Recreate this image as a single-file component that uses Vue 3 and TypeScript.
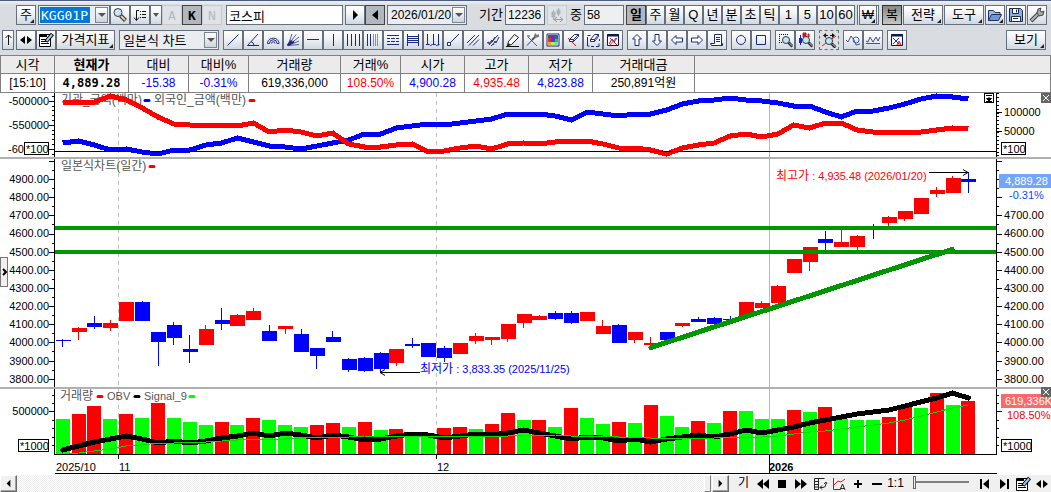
<script setup lang="ts">
import { h, ref } from 'vue'

interface Shape { d: string; s?: string; f?: string; w?: number }

const navy = '#1a2a80'
const circle = (x: number, y: number, r: number) =>
  `M${x - r} ${y}a${r} ${r} 0 1 0 ${2 * r} 0a${r} ${r} 0 1 0 ${-2 * r} 0z`

const lens = (x: number, y: number): Shape[] => [
  { d: `M${x + 2.5} ${y + 2.5}l4 4`, s: '#303030', w: 3 },
  { d: `M${x + 3.5} ${y + 3}l3 3`, s: '#b9bdc4', w: 1 },
  { d: circle(x, y, 3.5), s: '#2d3b4a', f: '#bfe6f0' },
]

const icons: Record<string, Shape[]> = {
  search: [
    { d: 'M8.5 8.5l5 5', s: '#303030', w: 4 },
    { d: 'M9 9l4 4', s: '#d9d3a0', w: 2 },
    { d: circle(6, 5.5, 4), s: '#2f4258', f: '#c2e0f0' },
    { d: 'M4 5l2-2M5 7l3-3', s: '#ffffff' },
  ],
  list: [
    { d: 'M7 3.500H4.500V13M2 10.500l2.500 3 2.500-3', s: '#111' },
    { d: 'M8 4.500h1M8 7.500h1M8 10.500h1M10 4.500h4M10 7.500h4M10 10.500h4', s: '#111' },
  ],
  play: [{ d: 'M6 3l5 5-5 5z', f: '#000' }],
  back: [{ d: 'M11 3v10L5 8z', f: '#000' }],
  spread: [
    { d: 'M4.500 3v10M9.500 1v8M3 5h3v5H3zM8 3h3v4H8z', s: '#aeb3b9', f: '#aeb3b9' },
    { d: 'M5 12.500h9M8 10l-3 2.500L8 15M11 10l3 2.500-3 2.500', s: '#989da5' },
  ],
  folder: [
    { d: 'M1.500 13.500v-10h5l1.500 2h5v3', s: '#23345c', f: '#9dbbe6' },
    { d: 'M1.500 13.500l3-6h10l-3 6z', s: '#23345c', f: '#6d98d4' },
  ],
  save: [
    { d: 'M1.500 1.500h11l2 2v11h-13z', s: '#1d2c4d', f: '#8eaee0' },
    { d: 'M4.500 1.500h6v5h-6zM3.500 9.500h9v5h-9z', s: '#1d2c4d', f: '#ffffff' },
    { d: 'M8.500 2.500v3M5 11.500h5', s: '#1d2c4d' },
  ],
  wrench: [
    { d: 'M2 14l8-8', s: '#444', w: 4 },
    { d: 'M2.500 13.500l7-7', s: '#b6b6b6', w: 2 },
    { d: 'M8 6l1-4 3-1-1 3 2 1 2-1-1 4-4 1z', s: '#444', f: '#aaaaaa' },
  ],
  up: [{ d: 'M8.500 3v10M5.500 6l3-3 3 3', s: '#111' }],
  both: [{ d: 'M7 4v8L2 8zM9 4v8l5-4z', f: '#000' }],
  note: [
    { d: 'M1.500 2.500h11v12h-11z', s: '#000', f: '#ffffff' },
    { d: 'M1 4h8', s: '#000', w: 2 },
    { d: 'M3 7.500h5M3 9.500h6M3 11.500h8', s: '#000' },
    { d: 'M14.500 2L8 9.500', s: '#000', w: 4 },
    { d: 'M14 2.500L8.500 9', s: '#9cc5ef', w: 2 },
  ],
  line: [{ d: 'M2.500 13.500l11-11', s: navy }],
  angle: [{ d: 'M13 2L2.500 13.500H14M6 9.500q3 1 3 4', s: navy }],
  arcs: [
    { d: 'M2.500 11.500v-1a6 6 0 0 1 11.500 0v1M4.500 11.500a3.700 3.700 0 0 1 7.500 0M6.500 11.500a1.700 1.700 0 0 1 3.500 0M2.500 11.500h2M12 11.500h2', s: navy },
  ],
  fan: [
    { d: 'M3 13.500L7 2M3 13.500l8-11M3 13.500L14 5M3 13.500L14 9M3 13.500l11-1', s: '#506090' },
    { d: 'M2.500 13.500l4-5M3 13.500l6-4', s: navy, w: 2 },
  ],
  hline: [{ d: 'M2 7.500h12', s: navy }],
  vline: [{ d: 'M8.500 2v12', s: navy }],
  bars: [{ d: 'M2.500 2v12M6.500 2v12M10.500 2v12M14.500 2v12', s: navy }],
  barsfade: [
    { d: 'M2.500 2v12M5.500 2v12', s: navy },
    { d: 'M8.500 2v12M10.500 2v12M12.500 2v12', s: '#8490b0' },
  ],
  rows: [
    { d: 'M2 3.500h12M2 12.500h12', s: navy },
    { d: 'M2 6.500h3M6 6.500h4M11 6.500h3M2 9.500h3M6 9.500h4M11 9.500h3', s: navy },
  ],
  ladder: [{ d: 'M2.500 2v12M13.500 2v12M3 4.500h10M3 6.500h10M3 8.500h10M3 10.500h10', s: navy }],
  waves: [{ d: 'M2.500 2v11M8.500 2v11M13.500 2v11M1 12.500h3.500l1 1 2-1h3l1 1 3-1', s: navy }],
  anchor: [{ d: 'M14 2L5 11', s: navy }, { d: 'M2.500 10.500h3v3h-3z', s: navy, f: '#fff' }],
  parallel: [{ d: 'M2 11l8-8M4 13.500L14 3M8 13.500l6-6', s: navy }],
  hatch: [{ d: 'M2 11l2-1 0 2 3-4 0 2 3-5M6 14l2-2 0 1 2-4 1 2 3-6M4 13l9-10', s: navy }],
  pencil: [
    { d: 'M3.500 9.500l6-7 4 3-7 7-4 1z', s: '#111', f: '#ffffff' },
    { d: 'M2 14l2-3 1 2z', f: '#111' },
    { d: 'M1 14.500h13', s: '#111' },
  ],
  cross: [
    { d: 'M3 5l9 9', s: '#e02020' },
    { d: 'M2 13.500L8 7M2 4h3', s: '#2030d0' },
    { d: 'M7 8l4-4', s: '#555', w: 2 },
    { d: 'M9 4l1-3 2 2 2-1v3l-4 1z', f: '#777' },
  ],
  palette: [
    { d: 'M2 2h12v12H2z', s: navy, f: '#fff' },
    { d: 'M3 3h3v3H3z', f: '#555' }, { d: 'M6 3h4v4H6z', f: '#7030b0' }, { d: 'M10 3h3v4h-3z', f: '#108060' },
    { d: 'M3 6h3v4H3z', f: '#e03030' }, { d: 'M6 7h4v3H6z', f: '#2050e0' }, { d: 'M10 7h3v3h-3z', f: '#30c060' },
    { d: 'M3 10h3v3H3z', f: '#f0a040' }, { d: 'M6 10h4v3H6z', f: '#b0f040' }, { d: 'M10 10h3v3h-3z', f: '#60e0d0' },
  ],
  eraser: [
    { d: 'M3 6l8 8', s: '#e02020' },
    { d: 'M4.500 7.500l5-5h4l-5 5zM4.500 7.500v2h4l5-5v-2M8.500 7.500v2', s: navy, f: '#fff' },
  ],
  eraserall: [
    { d: 'M2.500 5v9h2M6 14.500h3M11 14.500h3v-3M14.500 9V7M2.500 3.500h3', s: navy },
    { d: 'M5.500 7.500l4-5h4l-4 5zM5.500 7.500v2h4l4-5v-2M9.500 7.500v2', s: navy, f: '#fff' },
  ],
  delwin: [
    { d: 'M2.500 2.500h11v11h-11z', s: '#101850', f: '#fff' },
    { d: 'M2 3.500h12', s: '#101850', w: 2 },
    { d: 'M4 12l3-5 2 3 3-4', s: '#2030d0' },
    { d: 'M5 6l7 7M11 6l-6 7', s: '#e02020' },
  ],
  aup: [{ d: 'M8 2.500l4.500 4.500H10v6.500H6V7H3.500z', s: navy, f: '#fff' }],
  adown: [{ d: 'M8 13.500L3.500 9H6V2.500h4V9h2.500z', s: navy, f: '#fff' }],
  aleft: [{ d: 'M2.500 8L7 3.500V6h6.500v4H7v2.500z', s: navy, f: '#fff' }],
  aright: [{ d: 'M13.500 8L9 3.500V6H2.500v4H9v2.500z', s: navy, f: '#fff' }],
  scroll: [
    { d: 'M5.500 2.500h7v11h-10l-1-2h4z', s: navy, f: '#fff' },
    { d: 'M12.500 11.500h1v2h-4', s: navy },
    { d: 'M7 5.500h4M7 7.500h4M7 9.500h4', s: navy },
  ],
  round: [{ d: circle(8, 8, 4.5), s: navy }],
  square: [{ d: 'M3.500 3.500h9v9h-9z', s: navy }],
  zoombox: [
    { d: 'M2.500 2v1M2.500 4v1M2.500 6v1M2.500 8v1M2.500 10v1M4 2.500h1M6 2.500h1M8 2.500h1M10 2.500h1M4 10.500h1', s: '#111' },
    ...lens(9, 8),
  ],
  zoomcandle: [
    { d: 'M3.500 3v10', s: '#1020e0' }, { d: 'M2 6h3v5H2z', f: '#1020e0' },
    { d: 'M6 1h3v4H6zM11 2h1v3h-1z', s: '#e01010', f: '#e01010' },
    ...lens(9, 8),
  ],
  zoomfit: [
    { d: 'M1 14L15 4', s: '#e02020' },
    { d: 'M4 3.500h3M9 3.500h3', s: '#111' },
    { d: 'M5 1v5L2 3.500zM11 1v5l3-2.500z', f: '#111' },
    ...lens(8, 9),
  ],
  wave1: [
    { d: 'M1 8l2 2 3-6 3 4 2 5 4-1', s: '#455080' },
    { d: circle(11, 8, 3), s: '#4060c0' },
  ],
  wave2: [{ d: 'M1 9l2 1 2-5 3 5 3-5 2 4 2-4', s: '#455080' }, { d: 'M1 11.500h14', s: '#3050d0' }],
  winA: [
    { d: 'M2.500 2.500h11v11h-11z', s: '#101850', f: '#fff' },
    { d: 'M2 3.500h12', s: '#101850', w: 2 },
    { d: 'M4 6l6 6M10 6l-6 6', s: '#2030d0' },
    { d: 'M8 13l2-4 2 4M9 12h3', s: '#e02020' },
  ],
  rew: [{ d: 'M8 3v10L2 8zM14 3v10L8 8z', f: '#000' }],
  stop: [{ d: 'M4 4h8v8H4z', f: '#000' }],
  fwd: [{ d: 'M2 3v10l6-5zM8 3v10l6-5z', f: '#000' }],
  grid: [
    { d: 'M2.500 2.500h10M2.500 2.500v11h4v-11M2.500 5.500h4M2.500 8.500h4M2.500 11h4', s: '#222' },
    { d: 'M8 11.500h3q3 0 3-4M8 11.500l2-2M8 11.500l2 2M12 8l2-2 1 2', s: '#222' },
  ],
  chartA: [
    { d: 'M2.500 2v11.500H9', s: '#444' },
    { d: 'M3 9l4-4 3 1 4-3', s: '#e02020' },
    { d: 'M9 14l2.500-6L14 14M10 12.500h3', s: '#222' },
  ],
  plus: [{ d: 'M4 8h8M8 4v8', s: '#000', w: 2 }],
  minus: [{ d: 'M3 8h10', s: '#000', w: 2 }],
  first: [{ d: 'M4 3v10', s: '#000', w: 2 }, { d: 'M12 3v10L6 8z', f: '#000' }],
  last: [{ d: 'M12 3v10', s: '#000', w: 2 }, { d: 'M4 3v10l6-5z', f: '#000' }],
}

const Icon = (props: { name: string }) =>
  h('svg', { viewBox: '0 0 16 16', width: 16, height: 16, 'aria-hidden': 'true' },
    icons[props.name].map(p => h('path', {
      d: p.d, stroke: p.s ?? 'none', fill: p.f ?? 'none', 'stroke-width': p.w ?? 1,
    })))
Icon.props = ['name']

const drawTools = ['line', 'angle', 'arcs', 'fan', 'hline', 'vline', 'bars', 'barsfade', 'rows', 'ladder', 'waves',
  'anchor', 'parallel', 'hatch', 'pencil', 'cross', 'palette', 'eraser', 'eraserall', 'delwin']
const toolGroups = [drawTools, ['aup', 'adown', 'aleft', 'aright', 'scroll'], ['round', 'square'],
  ['zoombox', 'zoomcandle'], ['zoomfit'], ['wave1', 'wave2'], ['winA']]
const fileTools = ['folder', 'save', 'wrench']
const playTools = ['rew', 'stop', 'fwd', 'grid', 'chartA', 'plus', 'minus']
const endTools = ['first', 'last', 'note', 'both']
const periods = ['일', '주', '월', 'Q', '년', '분', '초', '틱', '1', '5', '10', '60']

const code = ref('KGG01P')
const stock = ref('코스피')
const date = ref('2026/01/20')
const span = ref('12236')
const shown = ref('58')
const period = ref('일')
const offset = ref(0)

const quote = [
  { h: '시각', v: '[15:10]', c: '' },
  { h: '현재가', v: '4,889.28', c: 'strong' },
  { h: '대비', v: '-15.38', c: 'down' },
  { h: '대비%', v: '-0.31%', c: 'down' },
  { h: '거래량', v: '619,336,000', c: '' },
  { h: '거래%', v: '108.50%', c: 'rise' },
  { h: '시가', v: '4,900.28', c: 'down' },
  { h: '고가', v: '4,935.48', c: 'rise' },
  { h: '저가', v: '4,823.88', c: 'down' },
  { h: '거래대금', v: '250,891억원', c: '' },
  { h: '', v: '', c: '' },
]

const x = (i: number) => 62.7 + i * 15.89
const R = '#ff0000'
const B = '#0000ff'
const G = '#00ff00'

// body top, body bottom, high, low
const candles: [string, number, number, number, number][] = [
  [B, 340, 341, 339, 347], [R, 328, 332, 327, 340], [B, 323, 327, 316, 329], [R, 323, 328, 320, 331],
  [R, 302, 321, 302, 321], [B, 302, 321, 301, 321], [B, 332, 342, 332, 366], [B, 325, 338, 322, 345],
  [B, 349, 352, 335, 363], [R, 329, 345, 325, 345], [B, 320, 324, 308, 330], [R, 315, 326, 314, 326],
  [R, 311, 320, 308, 320], [B, 331, 341, 325, 341], [R, 326, 329, 326, 334], [B, 334, 352, 329, 352],
  [B, 348, 356, 348, 369], [B, 337, 342, 331, 342], [B, 359, 370, 358, 372], [B, 358, 371, 357, 372],
  [B, 353, 369, 352, 372], [R, 349, 363, 349, 366], [B, 344, 346, 338, 348], [B, 343, 357, 343, 357],
  [B, 348, 358, 346, 362], [R, 343, 354, 343, 354], [R, 336, 341, 333, 344], [R, 337, 340, 337, 345],
  [R, 324, 339, 324, 342], [R, 314, 323, 314, 328], [R, 316, 320, 315, 320], [B, 313, 319, 311, 320],
  [B, 313, 323, 311, 324], [R, 312, 321, 312, 321], [R, 326, 334, 320, 334], [B, 325, 343, 324, 343],
  [R, 332, 340, 332, 343], [R, 343, 345, 337, 345], [B, 332, 340, 332, 340], [R, 323, 326, 323, 327],
  [B, 319, 322, 317, 322], [B, 318, 324, 317, 324], [B, 319, 320, 316, 320], [R, 302, 316, 302, 316],
  [R, 303, 308, 301, 308], [R, 286, 303, 285, 303], [R, 259, 273, 259, 273], [R, 247, 262, 247, 271],
  [B, 239, 243, 231, 250], [R, 242, 247, 230, 247], [R, 236, 247, 235, 250], [B, 228, 229, 224, 239],
  [R, 217, 223, 216, 226], [R, 211, 219, 211, 221], [R, 198, 214, 198, 214], [R, 190, 194, 187, 197],
  [R, 178, 193, 176, 193], [B, 179, 182, 172, 193],
]

const volumeTop = [419, 414, 406, 419, 414, 418, 403, 418, 422, 425, 422, 425, 418, 420, 425, 427, 425, 423, 427,
  422, 430, 429, 432, 433, 428, 427, 429, 424, 413, 420, 420, 427, 408, 418, 424, 422, 423, 405, 416, 427,
  421, 423, 411, 411, 419, 419, 410, 412, 407, 419, 420, 420, 417, 406, 408, 393, 405, 401]
const volumeUp = new Set([1, 2, 4, 6, 10, 12, 16, 17, 19, 21, 24, 25, 27, 28, 30, 32, 35, 37, 40, 42, 46, 48, 52, 53, 55, 57])

const obv = [450, 446, 442, 439, 436, 439, 443, 441, 443, 441, 438, 436, 433, 436, 433, 435, 438, 435, 437, 440, 439,
  436, 434, 435, 438, 436, 434, 435, 433, 430, 433, 436, 439, 437, 438, 441, 439, 442, 439, 437, 435, 437, 434, 430,
  433, 430, 427, 423, 420, 417, 414, 412, 410, 406, 402, 398, 393, 398]
const signal = [454, 453, 451, 449, 446, 445, 443, 443, 442, 442, 441, 440, 439, 439, 439, 438, 437, 437, 437, 436,
  436, 436, 436, 436, 436, 436, 436, 436, 436, 435, 435, 435, 436, 436, 436, 437, 437, 438, 438, 438, 438, 438, 437,
  437, 437, 436, 434, 432, 431, 429, 427, 425, 423, 420, 416, 412, 408, 405]
const inst = [143, 141, 145, 150, 149, 152, 154, 150, 150, 145, 143, 138, 142, 146, 147, 149, 146, 143, 140, 134, 134,
  128, 126, 124, 125, 123, 121, 119, 114, 114, 114, 116, 120, 112, 114, 116, 114, 114, 110, 104, 101, 100, 98, 100,
  101, 103, 106, 106, 112, 117, 111, 111, 108, 104, 99, 96, 97, 99]
const foreign = [102, 102, 102, 96, 100, 108, 117, 124, 125, 125, 125, 126, 123, 132, 130, 132, 136, 133, 144, 147,
  147, 145, 144, 152, 151, 148, 146, 149, 144, 143, 144, 142, 141, 141, 144, 148, 148, 150, 154, 148, 145, 143, 136,
  134, 137, 134, 125, 128, 123, 123, 130, 132, 132, 133, 132, 130, 128, 129]

const points = (ys: number[]) => ys.map((y, i) => `${x(i).toFixed(1)},${y}`).join(' ')

const prices = Array.from({ length: 12 }, (_, i) => {
  const value = 4900 - i * 100
  return { label: value.toFixed(2), y: Math.round(179 + i * 18.15) }
})

const ticks = (ys: number[], from: number, len: number) => ys.map(y => `M${from} ${y}.5h${len}`).join('')
const range = (a: number, b: number, step: number) => {
  const out: number[] = []
  for (let v = a; v <= b; v += step) out.push(Math.round(v))
  return out
}
const priceMajor = range(161, 380, 18.15)
const priceMinor = range(170, 380, 18.15)
const tickPath = [
  ticks([101, 125, 149], 49, 6), ticks(range(96, 156, 4.8), 52, 3), ticks(priceMajor, 49, 6), ticks(priceMinor, 52, 3),
  ticks([411], 49, 6), ticks([395, 403, 420, 428, 437, 445], 52, 3),
  ticks([112, 131], 997, 5), ticks(range(93, 156, 3.9), 997, 2), ticks(priceMajor, 997, 5), ticks(priceMinor, 997, 2),
  ticks([411], 997, 5), ticks([395, 403, 420, 428, 437, 445], 997, 2),
].join('')
</script>

<template>
  <main class="app">
    <header class="bars">
      <div class="row top">
        <button class="btn mark">주</button>
        <div class="group">
          <span class="combo code">
            <input v-model="code" aria-label="종목코드" />
            <button class="drop" aria-label="종목 목록"></button>
          </span>
          <button class="btn" aria-label="검색"><Icon name="search" /></button>
          <button class="btn" aria-label="목록"><Icon name="list" /></button>
          <button class="btn slim caret" aria-label="더보기"></button>
          <button class="btn mono off" disabled>A</button>
          <button class="btn mono pressed">K</button>
          <button class="btn mono off" disabled>N</button>
        </div>
        <input v-model="stock" class="box name" aria-label="종목명" />
        <div class="group">
          <button class="btn" aria-label="다음"><Icon name="play" /></button>
          <button class="btn pressed" aria-label="이전"><Icon name="back" /></button>
        </div>
        <span class="combo date">
          <input v-model="date" aria-label="날짜" />
          <button class="drop" aria-label="달력"></button>
        </span>
        <label class="field">기간<input v-model="span" class="box num" /></label>
        <button class="btn off" disabled aria-label="간격"><Icon name="spread" /></button>
        <label class="field near">중<input v-model="shown" class="box num" /></label>
        <div class="group periods">
          <button v-for="p in periods" :key="p" class="btn" :class="{ pressed: p === period }" @click="period = p">{{ p }}</button>
        </div>
        <button class="btn mark won">₩</button>
        <div class="group menus">
          <button class="btn dark">복</button>
          <button class="btn wide mark">전략</button>
          <button class="btn wide mark">도구</button>
          <button v-for="n in fileTools" :key="n" class="btn" :class="{ mark: n === 'folder' }" :aria-label="n">
            <Icon :name="n" />
          </button>
        </div>
      </div>

      <div class="row tools">
        <button class="btn slim" aria-label="위로"><Icon name="up" /></button>
        <div class="group">
          <button v-for="n in ['both', 'note']" :key="n" class="btn" :aria-label="n"><Icon :name="n" /></button>
          <button class="btn index mark">가격지표</button>
        </div>
        <span class="combo kind">
          <select aria-label="차트 종류"><option>일본식 차트</option></select>
          <span class="drop" aria-hidden="true"></span>
        </span>
        <div v-for="(g, gi) in toolGroups" :key="gi" class="group">
          <button v-for="n in g" :key="n" class="btn" :class="{ dotted: n === 'zoomfit' }" :aria-label="n">
            <Icon :name="n" />
          </button>
        </div>
        <button class="btn wide mark view">보기</button>
      </div>
    </header>

    <table class="quote">
      <colgroup>
        <col class="c54" /><col class="c74" /><col class="c60" /><col class="c60" /><col class="c92" /><col class="c60" />
        <col class="c64" /><col class="c64" /><col class="c64" /><col class="c102" /><col />
      </colgroup>
      <thead>
        <tr><th v-for="(q, i) in quote" :key="i" :class="{ strong: q.c === 'strong' }">{{ q.h }}</th></tr>
      </thead>
      <tbody>
        <tr><td v-for="(q, i) in quote" :key="i" :class="q.c">{{ q.v }}</td></tr>
      </tbody>
    </table>

    <section class="chart">
      <svg class="plot" viewBox="0 93 1051 382" role="img" aria-label="코스피 일간 차트">
        <g shape-rendering="crispEdges">
          <path d="M118.500 93V454M436.500 93V454" stroke="#c0c0c0" stroke-dasharray="4 4" fill="none" />
          <path d="M769.500 93V454" stroke="#b8b8b8" />
        </g>

        <g class="legend">
          <text x="61" y="104" class="ko">기관_금액(백만)</text>
          <text x="154" y="104" class="ko">외국인_금액(백만)</text>
          <text x="61" y="170" class="ko">일본식차트(일간)</text>
          <text x="60" y="400" class="ko">거래량</text>
          <text x="107" y="400">OBV</text>
          <text x="144" y="400">Signal_9</text>
        </g>
        <g fill="none" stroke-width="3" stroke-linecap="round">
          <path d="M145 100.500h4" stroke="#0000ff" />
          <path d="M250 100.500h4M150 166.500h4M98 396.500h4" stroke="#ff0000" />
          <path d="M135 396.500h4" stroke="#000" />
          <path d="M190 396.500h4" stroke="#00ff00" />
        </g>

        <g shape-rendering="crispEdges">
          <polyline :points="points(inst)" fill="none" stroke="#0000ff" stroke-width="5" />
          <polyline :points="points(foreign)" fill="none" stroke="#ff0000" stroke-width="5" />
          <path d="M55 151.500H996" stroke="#000" />

          <g v-for="(c, i) in candles" :key="i" :fill="c[0]">
            <rect v-if="i !== 51" :x="Math.round(x(i) - 7)" :y="c[1]" width="15" :height="c[2] - c[1]" />
            <rect :x="Math.floor(x(i))" :y="c[3]" width="1" :height="c[4] - c[3]" />
          </g>
          <path d="M55 228H996M55 252H996" stroke="#009600" stroke-width="4" />
          <path d="M651 347.500L952 249.500" stroke="#009600" stroke-width="5" stroke-linecap="round" />

          <rect v-for="(v, i) in volumeTop" :key="'v' + i" :x="Math.round(x(i) - 7)" :y="v" width="14" :height="454 - v" :fill="volumeUp.has(i) ? R : G" />
          <polyline :points="points(obv)" fill="none" stroke="#000" stroke-width="5" stroke-linecap="round" />
          <polyline :points="points(signal)" fill="none" stroke="#00e000" stroke-width="1" />

          <path d="M54.500 93V157M54.500 159V387M54.500 389V454M996.500 93V157M996.500 159V387M996.500 389V454M54 454.500H997M55 473.500H997" stroke="#000" />
          <path d="M118.500 454V459M436.500 454V459M769.500 454V473" stroke="#000" />
          <path :d="tickPath" stroke="#000" />
          <path d="M0 158H1051M0 388H1051" stroke="#b0b0b0" stroke-width="2" />
          <path d="M929 172.500H968M380 372.500H420" stroke="#000" />
        </g>
        <path d="M963 169.500l5 3-5 3M385 369.500l-5 3 5 3" stroke="#000" fill="none" />

        <text x="776" y="180" fill="#ff0000"><tspan class="ko">최고가</tspan> : 4,935.48 (2026/01/20)</text>
        <text x="420" y="373" fill="#0000ff"><tspan class="ko">최저가</tspan> : 3,833.35 (2025/11/25)</text>

        <g text-anchor="end">
          <text x="49" y="105">-500000</text>
          <text x="49" y="129">-550000</text>
          <text x="24" y="153">-60</text>
          <text v-for="p in prices" :key="p.label" x="49" :y="p.y + 4">{{ p.label }}</text>
          <text x="49" y="415">500000</text>
        </g>
        <g>
          <text x="1004" y="116">100000</text>
          <text x="1004" y="135">50000</text>
          <text v-for="p in prices.slice(2)" :key="p.label" x="1004" :y="p.y + 4">{{ p.label }}</text>
        </g>
        <g fill="#fff" stroke="#000" shape-rendering="crispEdges">
          <rect x="24.500" y="142.500" width="24" height="12" />
          <rect x="1001.500" y="142.500" width="24" height="12" />
          <rect x="18.500" y="439.500" width="30" height="12" />
          <rect x="1001.500" y="439.500" width="30" height="12" />
        </g>
        <text x="26" y="153">*100</text>
        <text x="1003" y="153">*100</text>
        <text x="20" y="450">*1000</text>
        <text x="1003" y="450">*1000</text>

        <rect x="999" y="174" width="52" height="14" fill="#70a6ff" />
        <text x="1005" y="185" class="light">4,889.28</text>
        <text x="1009" y="199" fill="#0050f0">-0.31%</text>
        <rect x="1001" y="394" width="50" height="14" fill="#ff6868" />
        <text x="1005" y="405" class="light">619,336K</text>
        <text x="1007" y="419" fill="#f00000">108.50%</text>

        <text x="56" y="471">2025/10</text>
        <text x="119" y="471">11</text>
        <text x="437" y="471">12</text>
        <text x="769" y="471" class="year">2026</text>
      </svg>
      <button class="mini fold" aria-label="접기">
        <svg viewBox="0 0 8 8"><path d="M4 3v4L1.500 4.500h5L4 7" stroke="#000" fill="#000" /><path d="M1 1.500h6M1 7.500h6" stroke="#000" /></svg>
      </button>
      <button class="mini close" aria-label="지표 닫기">
        <svg viewBox="0 0 10 10"><path d="M2 2l6 6M8 2l-6 6" stroke="#fff" /></svg>
      </button>
      <button class="mini close lower" aria-label="거래량 닫기">
        <svg viewBox="0 0 10 10"><path d="M2 2l6 6M8 2l-6 6" stroke="#fff" /></svg>
      </button>
      <button class="handle" aria-label="패널 열기">
        <svg viewBox="0 0 6 8"><path d="M2 1l3 3-3 3" stroke="#000" stroke-width="2" fill="none" /></svg>
      </button>
    </section>

    <footer class="foot">
      <button class="scroll" aria-label="왼쪽"><svg viewBox="0 0 16 16"><path d="M10 4v8L6 8z" /></svg></button>
      <div class="track"></div>
      <span class="split"></span>
      <button class="scroll" aria-label="오른쪽"><svg viewBox="0 0 16 16"><path d="M6 4v8l4-4z" /></svg></button>
      <div class="group play">
        <button class="flat">기</button>
        <button v-for="n in playTools" :key="n" class="flat" :aria-label="n"><Icon :name="n" /></button>
        <button class="flat">1:1</button>
      </div>
      <input v-model="offset" class="slider" type="range" min="0" max="100" aria-label="확대" />
      <div class="group">
        <button v-for="n in endTools" :key="n" class="flat" :aria-label="n"><Icon :name="n" /></button>
      </div>
    </footer>
  </main>
</template>

<style>
body {
  background: #fff;
}
</style>

<style scoped>
.app {
  font: 12px "Liberation Sans", "Noto Sans CJK KR", sans-serif;
  color: #000;
  overflow: hidden;
}

button,
input,
select {
  font: inherit;
  color: inherit;
  margin: 0;
  padding: 0;
  border-radius: 0;
  box-sizing: border-box;
}

.bars {
  border-top: 1px solid #4c5c84;
  background: linear-gradient(#f0f2f4, #d9dde2 4px, #d9dde2);
  padding: 4px 5px 5px 2px;
  display: flex;
  flex-direction: column;
  gap: 5px;
}

.row {
  display: flex;
  height: 20px;
}

.top {
  gap: 2px;
  padding-left: 14px;
}

.tools {
  gap: 4px;
}

.tools .slim + .group {
  margin-left: -2px;
}

.group {
  display: flex;
}

.menus {
  gap: 1px;
}

.btn {
  position: relative;
  flex: none;
  width: 20px;
  height: 20px;
  border: 1px solid #65707c;
  background: linear-gradient(#fff, #f2f4f7 40%, #d0d8e2);
  display: flex;
  align-items: center;
  justify-content: center;
  font-size: 13px;
  line-height: 18px;
  white-space: nowrap;
}

.btn svg,
.flat svg {
  flex: none;
  display: block;
}

.slim {
  width: 12px;
}

.wide {
  width: 40px;
}

.index {
  width: 59px;
}

.view {
  margin-left: auto;
}

.mark::after {
  content: "";
  position: absolute;
  right: 1px;
  bottom: 1px;
  border: 2px solid #222;
  border-top-color: transparent;
  border-left-color: transparent;
}

.mono {
  font: bold 13px "DejaVu Sans Mono", monospace;
}

.pressed {
  background: #b2b6bd;
  border-color: #444;
}

.dark {
  background: linear-gradient(#888, #c4c4c4);
  border-color: #333;
}

.off {
  background: #dfe2e6;
  border-color: #c6cacf;
  color: #b5b9be;
  font-weight: normal;
}

.dotted {
  border-style: dashed;
  background: #dcdfe3;
}

.periods .btn {
  width: 19px;
}

.periods .btn:first-child {
  width: 20px;
}

.periods .pressed {
  font-weight: bold;
}

.won {
  width: 22px;
  margin-right: 1px;
  border-left-style: double;
  border-left-width: 3px;
  border-right-style: double;
  border-right-width: 3px;
}

.combo {
  position: relative;
  flex: none;
  display: flex;
  align-items: center;
  box-sizing: border-box;
  height: 20px;
  border: 1px solid #65707c;
  background: #e9edf1;
  padding: 1px;
}

.combo input,
.combo select {
  flex: 1;
  min-width: 0;
  height: 16px;
  border: 0;
  background: none;
  appearance: none;
  padding-left: 2px;
}

.code {
  width: 72px;
}

.code input {
  flex: none;
  width: 50px;
  margin-right: auto;
  padding: 0 0 0 1px;
  background: #0078d7;
  color: #fff;
  font: 13px "DejaVu Sans Mono", monospace;
}

.date {
  width: 80px;
}

.kind {
  width: 100px;
  font-size: 13px;
}

.drop {
  flex: none;
  box-sizing: border-box;
  width: 13px;
  height: 16px;
  border: 1px solid #7c858f;
  background: linear-gradient(#fff, #cdd4dc);
  display: flex;
  align-items: center;
  justify-content: center;
}

.kind .drop {
  position: absolute;
  right: 1px;
  pointer-events: none;
}

.drop::after,
.caret::after {
  content: "";
  border: 4px solid transparent;
  border-top-color: #555;
  border-bottom: 0;
}

.caret::after {
  border-width: 4px 3px 0;
}

.box {
  flex: none;
  height: 20px;
  border: 1px solid #65707c;
  background: #fff;
  padding: 0 2px;
}

.name {
  width: 117px;
  margin-left: 2px;
  font-size: 13px;
}

.num {
  width: 40px;
  background: #edf0f3;
}

.field {
  flex: none;
  display: flex;
  gap: 2px;
  padding-left: 10px;
  font-size: 13px;
  line-height: 20px;
  white-space: nowrap;
}

.field input {
  font-size: 12px;
}

.near {
  padding-left: 1px;
}

.quote {
  width: 100%;
  table-layout: fixed;
  border-collapse: collapse;
  background: #fff;
}

.quote th,
.quote td {
  border: 1px solid #808080;
  padding: 0;
  text-align: center;
  white-space: nowrap;
  font-weight: normal;
  line-height: 17px;
}

.quote th {
  height: 17px;
  background: #ebebeb;
  font-size: 13px;
}

.quote td {
  height: 18px;
  line-height: 18px;
}

.quote th.strong {
  font-weight: bold;
}

.quote td.strong {
  font: bold 12px "DejaVu Sans Mono", monospace;
}

.down {
  color: #0000ff;
}

.rise {
  color: #ff0000;
}

.c54 { width: 54px; }
.c60 { width: 60px; }
.c64 { width: 64px; }
.c74 { width: 74px; }
.c92 { width: 92px; }
.c102 { width: 102px; }

.chart {
  position: relative;
}

.plot {
  display: block;
  width: 100%;
  height: auto;
  font-size: 11px;
}

.ko {
  font-size: 12px;
}

.legend {
  fill: #555;
}

.light {
  fill: #fff;
}

.year {
  font-weight: bold;
}

.mini {
  position: absolute;
  top: 0;
  width: 10px;
  height: 10px;
  border: 0;
  background: #666;
  display: flex;
}

.mini svg {
  flex: none;
  width: 10px;
  height: 10px;
}

.fold {
  right: 57px;
  border: 1px solid #000;
  background: #fff;
}

.fold svg {
  width: 8px;
  height: 8px;
}

.close {
  right: 0;
}

.lower {
  top: 77%;
}

.handle {
  position: absolute;
  left: 0;
  top: 43%;
  width: 8px;
  height: 30px;
  border: 1px solid #777;
  background: #f0f0f0;
  display: flex;
  align-items: center;
}

.handle svg {
  flex: none;
  width: 6px;
  height: 8px;
}

.foot {
  display: flex;
  height: 17px;
  background: #f0f0f0;
}

.scroll {
  width: 17px;
  height: 17px;
  border: 1px solid;
  border-color: #fff #696969 #696969 #fff;
  background: #f0f0f0;
  box-shadow: inset -1px -1px #a0a0a0;
  display: flex;
}

.scroll svg {
  width: 15px;
  height: 15px;
}

.track {
  flex: 1;
  background: repeating-conic-gradient(#fff 0 25%, #ececec 0 50%) 0 0 / 2px 2px;
}

.split {
  width: 7px;
  margin-right: 1px;
  box-sizing: border-box;
  border: 1px solid;
  border-color: #fff #808080 #808080 #fff;
}

.play {
  padding-left: 5px;
}

.flat {
  width: 19px;
  height: 17px;
  border: 0;
  background: none;
  display: flex;
  align-items: center;
  justify-content: center;
  line-height: 17px;
  white-space: nowrap;
}

.slider {
  appearance: none;
  width: 56px;
  height: 15px;
  margin: 0 6px 0 8px;
  background: linear-gradient(#808080, #808080) 0 6px / 100% 2px no-repeat;
}

.slider::-webkit-slider-thumb {
  appearance: none;
  width: 3px;
  height: 13px;
  background: #f0f0f0;
  border: 1px solid #666;
}
</style>
